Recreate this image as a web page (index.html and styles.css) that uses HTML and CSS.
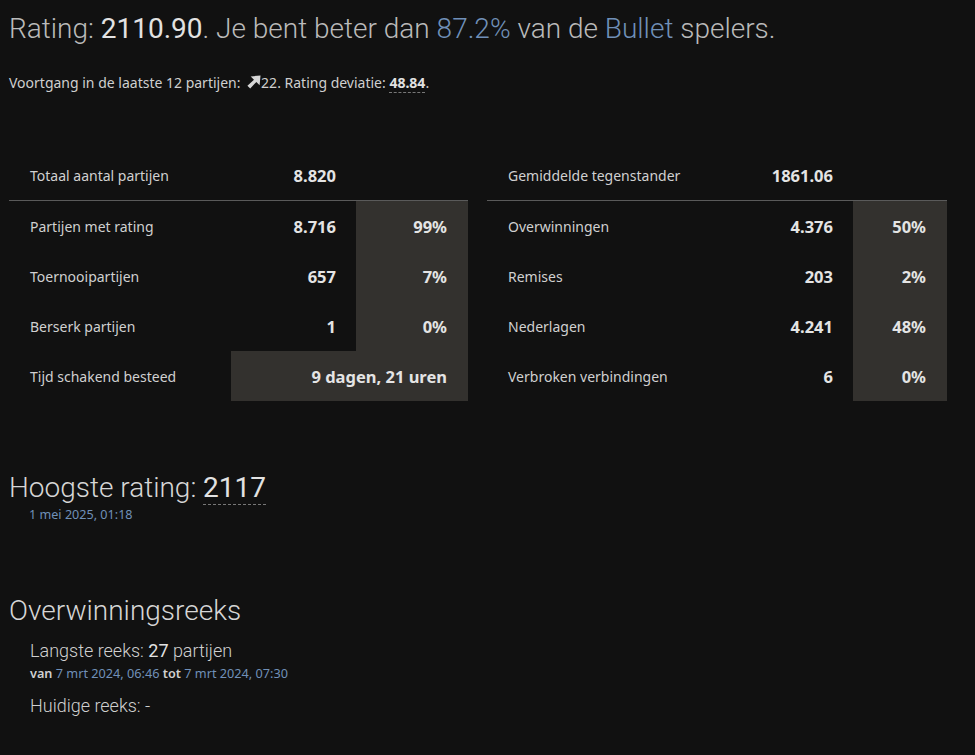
FILE: index.html
```html
<!DOCTYPE html>
<html lang="nl">
<head>
<meta charset="utf-8">
<link rel="stylesheet" href="styles.css">
</head>
<body>
<div class="page">
  <h1 class="title">Rating: <strong>2110.90</strong>. Je bent beter dan <a class="link">87.2%</a> van de <a class="link">Bullet</a> spelers.</h1>
  <p class="progress">Voortgang in de laatste 12 partijen: <svg class="arrow" viewBox="0 0 16 16" width="15" height="15"><path d="M15.5 0.5 L14.5 11 L11 7.5 L4.5 14.5 L1.5 11.5 L8.5 5 L5 1.5 Z" fill="#d6d6d6"/></svg>22. Rating deviatie: <strong class="dotted">48.84</strong>.</p>

  <div class="tables">
    <table class="stats left">
      <colgroup><col class="c-label"><col class="c-val"><col class="c-pct"></colgroup>
      <tr class="head"><th>Totaal aantal partijen</th><td class="val">8.820</td><td></td></tr>
      <tr><th>Partijen met rating</th><td class="val">8.716</td><td class="pct">99%</td></tr>
      <tr><th>Toernooipartijen</th><td class="val">657</td><td class="pct">7%</td></tr>
      <tr><th>Berserk partijen</th><td class="val">1</td><td class="pct">0%</td></tr>
      <tr><th>Tijd schakend besteed</th><td class="val pctbg" colspan="2">9 dagen, 21 uren</td></tr>
    </table>
    <table class="stats right">
      <colgroup><col class="c-label2"><col class="c-val2"><col class="c-pct2"></colgroup>
      <tr class="head"><th>Gemiddelde tegenstander</th><td class="val">1861.06</td><td></td></tr>
      <tr><th>Overwinningen</th><td class="val">4.376</td><td class="pct">50%</td></tr>
      <tr><th>Remises</th><td class="val">203</td><td class="pct">2%</td></tr>
      <tr><th>Nederlagen</th><td class="val">4.241</td><td class="pct">48%</td></tr>
      <tr><th>Verbroken verbindingen</th><td class="val">6</td><td class="pct">0%</td></tr>
    </table>
  </div>

  <section class="best">
    <h2 class="h2">Hoogste rating: <strong class="dotted">2117</strong></h2>
    <div class="date">1 mei 2025, 01:18</div>
  </section>

  <section class="streak">
    <h2 class="h2">Overwinningsreeks</h2>
    <div class="streak-body">
      <div class="line">Langste reeks: <strong>27</strong> partijen</div>
      <div class="range"><b>van</b> <a class="link">7 mrt 2024, 06:46</a> <b>tot</b> <a class="link">7 mrt 2024, 07:30</a></div>
      <div class="line current">Huidige reeks: -</div>
    </div>
  </section>
</div>
</body>
</html>
```
FILE: styles.css
```css
html, body {
  margin: 0;
  background: #111111;
  color: #bababa;
  font-family: "Noto Sans", sans-serif;
}
.page {
  padding: 0 0 0 9px;
  width: 938px;
}
.link { color: #7090b8; text-decoration: none; }
.title {
  margin: 0;
  padding-top: 12px;
  font-family: Roboto, sans-serif;
  font-weight: 300;
  font-size: 28px;
  line-height: 34px;
  color: #bababa;
  white-space: nowrap;
}
.title strong { font-weight: 400; color: #e2e2e2; }
.progress {
  margin: 27px 0 0 0;
  font-size: 14px;
  line-height: 20px;
  color: #cfcfcf;
  white-space: nowrap;
}
.arrow { vertical-align: -2px; margin-left: 2px; }
.progress strong { color: #e2e2e2; font-weight: 700; }
.dotted { border-bottom: 1px dashed #777; }
.tables {
  margin-top: 57px;
  display: flex;
  gap: 19px;
}
.stats {
  border-collapse: collapse;
  table-layout: fixed;
  font-size: 14px;
}
.stats.left { width: 459px; }
.stats.right { width: 460px; }
.c-label { width: 222px; }
.c-val { width: 125px; }
.c-pct { width: 112px; }
.c-label2 { width: 243px; }
.c-val2 { width: 123px; }
.c-pct2 { width: 94px; }
.stats th {
  text-align: left;
  font-weight: 400;
  color: #d0d0d0;
  padding: 0 0 0 21px;
  height: 50px;
}
.stats td { height: 50px; padding: 0 20px 0 0; }
.stats .val {
  text-align: right;
  font-weight: 700;
  font-size: 16.5px;
  color: #e4e4e4;
}
.stats .pct {
  background: #33312e;
  text-align: right;
  font-weight: 700;
  font-size: 16.5px;
  color: #e4e4e4;
  padding-right: 21px;
}
.stats .pctbg { background: #33312e; padding-right: 21px; }
.stats tr.head th, .stats tr.head td { border-bottom: 1px solid #5a5a5a; }
.best { margin-top: 70px; }
.h2 {
  margin: 0;
  font-family: Roboto, sans-serif;
  font-weight: 300;
  font-size: 28px;
  line-height: 34px;
  color: #d6d6d6;
}
.h2 strong { font-weight: 400; color: #e2e2e2; }
.date {
  margin-left: 20px;
  margin-top: 2px;
  font-size: 12.6px;
  line-height: 16px;
  color: #7090b8;
}
.streak { margin-top: 71px; }
.streak-body { padding-left: 21px; margin-top: 12px; }
.line {
  font-family: Roboto, sans-serif;
  font-weight: 300;
  font-size: 18px;
  line-height: 22px;
  color: #d0d0d0;
}
.line strong { font-weight: 400; color: #e2e2e2; }
.range { font-size: 12.7px; line-height: 20px; margin-top: 1px; color: #d0d0d0; }
.range b { font-weight: 600; }
.current { margin-top: 12px; }
```
